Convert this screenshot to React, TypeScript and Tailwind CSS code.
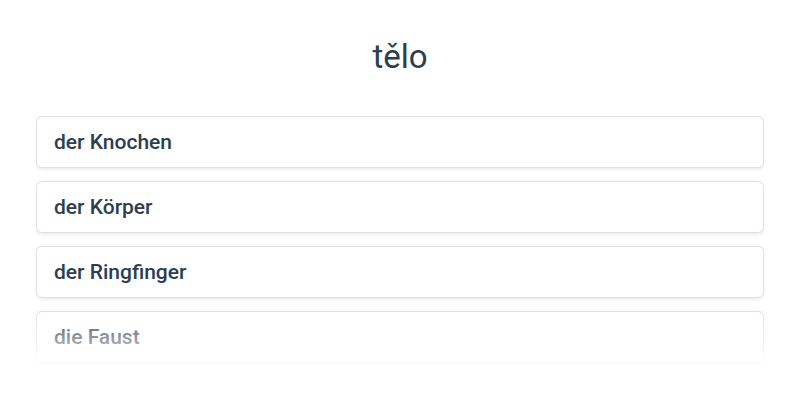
const WORDS = ["der Knochen", "der Körper", "der Ringfinger", "die Faust"];

export default function App() {
  return (
    <div className="h-[400px] w-[800px] overflow-hidden bg-white font-['Roboto',sans-serif] text-[#2c3e50]">
      <h1 className="pt-[35px] text-center text-[33px] leading-[44px] font-normal">tělo</h1>

      <div className="relative mx-[36px] mt-[37px] h-[254px] overflow-hidden">
        <ul className="flex flex-col gap-[13px]">
          {WORDS.map((w) => (
            <li
              key={w}
              className="flex h-[52px] items-center rounded-[6px] border border-[#e1e1e1] bg-white px-[17px] pt-[2px] text-[21px] font-medium shadow-[0_1px_4px_rgba(0,0,0,0.1)]"
            >
              {w}
            </li>
          ))}
        </ul>
        {/* fade out at the bottom */}
        <div className="pointer-events-none absolute inset-x-0 bottom-0 h-[60px] bg-gradient-to-b from-white/0 to-white" />
      </div>
    </div>
  );
}
